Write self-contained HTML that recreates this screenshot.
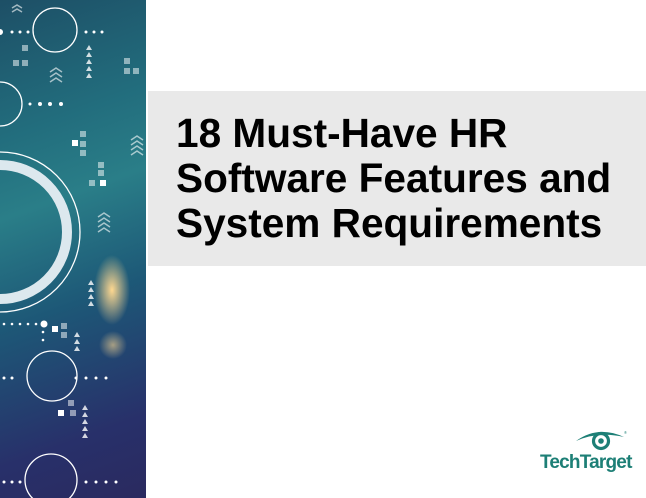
<!DOCTYPE html>
<html><head><meta charset="utf-8"><style>
html,body{margin:0;padding:0;width:646px;height:498px;overflow:hidden;background:#fff;}
.left{position:absolute;left:0;top:0;width:146px;height:498px;
background:linear-gradient(160deg,#1d4f66 0%,#226d7d 25%,#2a7e88 40%,#1d5877 60%,#28306a 85%,#2a2a5f 100%);overflow:hidden}
.box{position:absolute;left:148px;top:91px;width:498px;height:175px;background:#e9e9e9}
.title{position:absolute;left:176px;top:111px;font:bold 40.6px/45px "Liberation Sans",sans-serif;color:#000;letter-spacing:0}
.logo{position:absolute;left:540px;top:428px;width:100px;height:50px}
.logo span{position:absolute;left:0;top:24px;font:bold 19px "Liberation Sans",sans-serif;color:#1d7f76;letter-spacing:-0.8px}
</style></head><body>
<div class="left">
<svg width="146" height="498" style="position:absolute;left:0;top:0">
<defs><radialGradient id="g" cx="0.5" cy="0.5" r="0.5"><stop offset="0" stop-color="#ffd890"/><stop offset="1" stop-color="#ffd890" stop-opacity="0"/></radialGradient></defs>
<ellipse cx="112" cy="290" rx="18" ry="35" fill="url(#g)"/>
<ellipse cx="113" cy="345" rx="14" ry="14" fill="url(#g)" opacity="0.6"/>
<g fill="none" stroke="#fff" stroke-width="1.3">
<circle cx="55" cy="30" r="22"/><circle cx="0" cy="104" r="22"/>
<circle cx="0" cy="232" r="80" /><circle cx="52" cy="376" r="25"/><circle cx="51" cy="480" r="26"/>
</g>
<circle cx="0" cy="232" r="67" fill="none" stroke="#dce8ee" stroke-width="10"/>
<g fill="#fff">
<circle cx="0" cy="32" r="3"/><circle cx="12" cy="32" r="1.5"/><circle cx="20" cy="32" r="1.5"/><circle cx="28" cy="32" r="1.5"/>
<circle cx="86" cy="32" r="1.5"/><circle cx="94" cy="32" r="1.5"/><circle cx="102" cy="32" r="1.5"/>
<circle cx="30" cy="104" r="1.5"/><circle cx="40" cy="104" r="2"/><circle cx="50" cy="104" r="2"/><circle cx="61" cy="104" r="2"/>
<circle cx="4" cy="324" r="1.3"/><circle cx="12" cy="324" r="1.3"/><circle cx="20" cy="324" r="1.3"/><circle cx="28" cy="324" r="1.3"/><circle cx="36" cy="324" r="1.3"/><circle cx="44" cy="324" r="3.5"/>
<circle cx="43" cy="332" r="1.3"/><circle cx="43" cy="340" r="1.3"/>
<circle cx="4" cy="378" r="1.5"/><circle cx="12" cy="378" r="1.5"/><circle cx="76" cy="378" r="1.5"/><circle cx="86" cy="378" r="1.5"/><circle cx="96" cy="378" r="1.5"/><circle cx="106" cy="378" r="1.5"/>
<circle cx="4" cy="482" r="1.5"/><circle cx="12" cy="482" r="1.5"/><circle cx="20" cy="482" r="1.5"/><circle cx="86" cy="482" r="1.5"/><circle cx="96" cy="482" r="1.5"/><circle cx="106" cy="482" r="1.5"/><circle cx="116" cy="482" r="1.5"/>
<rect x="72" y="140" width="6" height="6"/><rect x="100" y="180" width="6" height="6"/><rect x="52" y="326" width="6" height="6"/><rect x="58" y="410" width="6" height="6"/>
</g>
<g fill="#ffffff" opacity="0.5">
<rect x="22" y="45" width="6" height="6"/><rect x="13" y="60" width="6" height="6"/><rect x="22" y="60" width="6" height="6"/>
<rect x="124" y="58" width="6" height="6"/><rect x="124" y="68" width="6" height="6"/><rect x="133" y="68" width="6" height="6"/>
<rect x="80" y="131" width="6" height="6"/><rect x="80" y="141" width="6" height="6"/><rect x="80" y="150" width="6" height="6"/>
<rect x="98" y="162" width="6" height="6"/><rect x="98" y="170" width="6" height="6"/><rect x="89" y="180" width="6" height="6"/>
<rect x="61" y="323" width="6" height="6"/><rect x="61" y="332" width="6" height="6"/><rect x="70" y="410" width="6" height="6"/><rect x="68" y="400" width="6" height="6"/>
</g>
<g fill="none" stroke="#fff" stroke-width="1.5" opacity="0.6">
<path d="M12 8l5-3 5 3M12 12l5-3 5 3"/>
<path d="M50 72l6-4 6 4M50 77l6-4 6 4M50 82l6-4 6 4"/>
<path d="M131 140l6-4 6 4M131 145l6-4 6 4M131 150l6-4 6 4M131 155l6-4 6 4"/>
<path d="M98 217l6-4 6 4M98 222l6-4 6 4M98 227l6-4 6 4M98 232l6-4 6 4"/>
</g>
<g fill="#fff" opacity="0.8">
<path d="M86 50l3-5 3 5zM86 57l3-5 3 5zM86 64l3-5 3 5zM86 71l3-5 3 5zM86 78l3-5 3 5z"/>
<path d="M88 285l3-5 3 5zM88 292l3-5 3 5zM88 299l3-5 3 5zM88 306l3-5 3 5z"/>
<path d="M74 337l3-5 3 5zM74 344l3-5 3 5zM74 351l3-5 3 5z"/>
<path d="M82 410l3-5 3 5zM82 417l3-5 3 5zM82 424l3-5 3 5zM82 431l3-5 3 5zM82 438l3-5 3 5z"/>
</g>
</svg>
</div>
<div class="box"></div>
<div class="title">18 Must-Have HR<br>Software Features and<br>System Requirements</div>
<div class="logo">
<svg width="100" height="26" style="position:absolute;left:0;top:0">
<path d="M36 13 Q58 -3 84 9 Q58 3 36 13z" fill="#1d7f76"/>
<circle cx="61" cy="13" r="7.5" fill="none" stroke="#1d7f76" stroke-width="3.2"/>
<circle cx="61" cy="13" r="2.8" fill="#1d7f76"/>
<text x="84" y="6" font-size="4" fill="#1d7f76" font-family="Liberation Sans">®</text>
</svg>
<span>TechTarget</span>
</div>
</body></html>
